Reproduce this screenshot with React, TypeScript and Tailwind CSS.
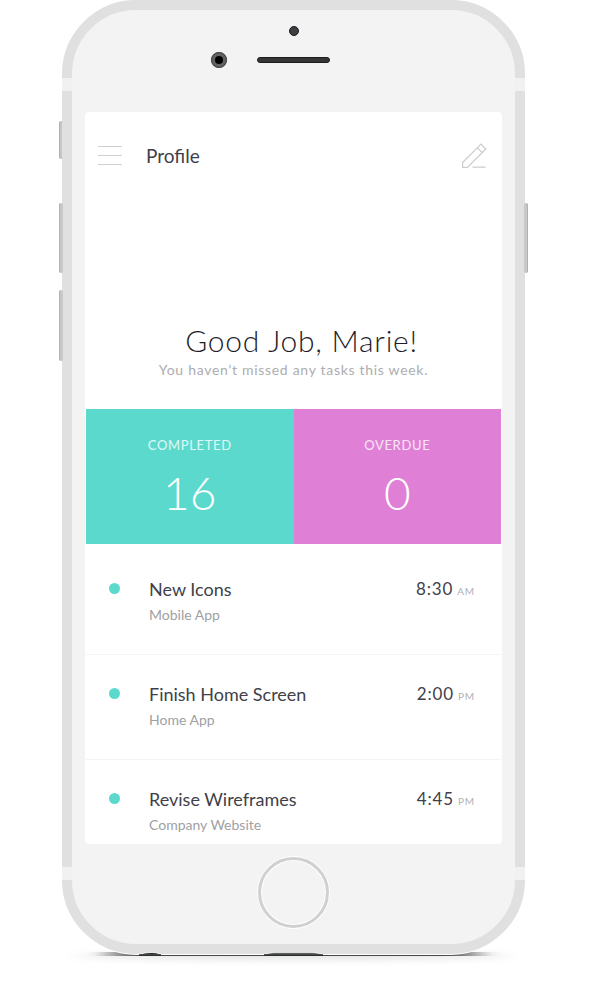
type Task = {
  title: string;
  project: string;
  time: string;
  period: string;
};

const tasks: Task[] = [
  { title: "New Icons", project: "Mobile App", time: "8:30", period: "AM" },
  { title: "Finish Home Screen", project: "Home App", time: "2:00", period: "PM" },
  { title: "Revise Wireframes", project: "Company Website", time: "4:45", period: "PM" },
];

function PencilIcon() {
  return (
    <svg width="25" height="26" viewBox="0 0 25 26" fill="none" stroke="#cbcbd0" strokeWidth="1.2" aria-hidden="true">
      <path d="M0.6 24.4V19.6L19 1.2L23.8 6L5.4 24.4H0.6Z" />
      <path d="M15.4 4.8L20.2 9.6" />
      <path d="M10.5 24.2H23.5" />
    </svg>
  );
}

function MenuIcon() {
  return (
    <svg width="24" height="20" viewBox="0 0 24 20" fill="none" stroke="#cfcfcf" strokeWidth="1" aria-hidden="true">
      <path d="M0 0.5H24M0 9.5H24M0 18.5H24" />
    </svg>
  );
}

function GroundShadow() {
  return (
    <svg
      className="absolute -bottom-6 -left-4 -z-10 h-10 w-[calc(100%+32px)]"
      viewBox="0 0 495 40"
      preserveAspectRatio="none"
      aria-hidden="true"
    >
      <defs>
        <linearGradient id="edge" x1="0" x2="1">
          <stop offset="0" stopColor="#444" stopOpacity="0" />
          <stop offset="0.12" stopColor="#444" />
          <stop offset="0.88" stopColor="#444" />
          <stop offset="1" stopColor="#444" stopOpacity="0" />
        </linearGradient>
        <filter id="soft" x="-10%" y="-100%" width="120%" height="300%">
          <feGaussianBlur stdDeviation="4 0.6" />
        </filter>
        <filter id="wide" x="-10%" y="-100%" width="120%" height="300%">
          <feGaussianBlur stdDeviation="12 3" />
        </filter>
      </defs>
      <ellipse cx="247" cy="18" rx="215" ry="4" fill="#bbb" opacity="0.4" filter="url(#wide)" />
      <rect x="47" y="14" width="401" height="4" fill="url(#edge)" filter="url(#soft)" />
    </svg>
  );
}

function BottomEdge() {
  return (
    <svg
      className="absolute -bottom-1 left-0 h-2 w-full"
      viewBox="0 0 463 8"
      preserveAspectRatio="none"
      fill="#2b2e2e"
      stroke="#fff"
      strokeWidth="0.8"
      aria-hidden="true"
    >
      <path d="M77 4.4Q83 2.4 90 2.4Q95 2.4 99 4.4" />
      <path d="M202 4.4Q207 2.8 212 2.8H251Q256 2.8 261 4.4" />
      <path d="M77 4.2H99V6H77ZM202 4.2H261V6H202Z" stroke="none" />
    </svg>
  );
}

function TaskRow({ task }: { task: Task }) {
  return (
    <li className="flex h-[105px] items-start border-b border-[#f4f4f4] pt-[25px] pr-[26px] pl-[23px]">
      <span className="mt-2 size-[11px] shrink-0 rounded-full bg-[#5cd9cd]" />
      <div className="ml-[29px] grow">
        <h3 className="text-lg leading-7 text-[#403f4a]">{task.title}</h3>
        <p className="text-sm leading-6 text-[#a0a0a4]">{task.project}</p>
      </div>
      <p className="flex items-baseline gap-1 text-[17px] leading-7 tracking-wider text-[#403f4a]">
        {task.time}
        <span className="text-[10px] text-[#b0b0b4]">{task.period}</span>
      </p>
    </li>
  );
}

function Screen() {
  return (
    <section className="h-[732px] overflow-hidden rounded bg-white">
      <header className="flex h-[88px] items-center pr-[15px] pl-[13px]">
        <button type="button" aria-label="Menu">
          <MenuIcon />
        </button>
        <h1 className="ml-6 grow text-[19px] text-[#403f4a]">Profile</h1>
        <button type="button" aria-label="Edit profile">
          <PencilIcon />
        </button>
      </header>
      <div className="h-[209px] pt-[120px] text-center">
        <h2 className="pl-4 text-[30px] leading-10 font-light tracking-wide text-[#1f1d2b]">Good Job, Marie!</h2>
        <p className="text-sm leading-5 tracking-wider text-[#adadb0]">You haven’t missed any tasks this week.</p>
      </div>
      <dl className="mx-px grid grid-cols-2 text-center text-white">
        <div className="h-[135px] bg-[#5cd9cd] pt-[26px]">
          <dt className="text-[13px] leading-5 tracking-wider text-white/80">COMPLETED</dt>
          <dd className="mt-3.5 text-[46px] leading-[48px] font-light">16</dd>
        </div>
        <div className="h-[135px] bg-[#df80d6] pt-[26px]">
          <dt className="text-[13px] leading-5 tracking-wider text-white/80">OVERDUE</dt>
          <dd className="mt-3.5 text-[46px] leading-[48px] font-light">0</dd>
        </div>
      </dl>
      <ul className="mx-px pt-1.5">
        {tasks.map((task) => (
          <TaskRow key={task.title} task={task} />
        ))}
      </ul>
    </section>
  );
}

export default function App() {
  return (
    <main className="min-h-screen bg-white pr-[75px] pb-11 pl-[62px] font-['Lato',sans-serif]">
      <div className="relative isolate max-w-[463px]">
        <GroundShadow />
        <span className="absolute top-[121px] -left-[3px] h-[38px] w-[3px] rounded-l-xs border-l border-[#b0b0b0] bg-[#c8c8c8]" />
        <span className="absolute top-[203px] -left-[3px] h-[70px] w-1 rounded-xs border-l border-[#b0b0b0] bg-[#c8c8c8]" />
        <span className="absolute top-[290px] -left-[3px] h-[71px] w-1 rounded-xs border-l border-[#b0b0b0] bg-[#c8c8c8]" />
        <span className="absolute top-[203px] -right-[3px] h-[70px] w-1 rounded-xs border-r border-[#b0b0b0] bg-[#c8c8c8]" />

        <div className="rounded-[74px] border-10 border-[#e0e0e0] bg-[#f3f3f3] px-[13px] shadow-[0_1px_0_#fff]">
          <div className="flex h-[102px] flex-col items-center pt-4">
            <span className="size-[10px] rounded-full border border-[#1c1c1e] bg-[#3d3e41]" />
            <div className="mt-4 grid w-full grid-cols-[1fr_auto_1fr] items-center gap-[30px]">
              <span className="size-4 justify-self-end rounded-full border-4 border-[#626262] bg-black outline-1 -outline-offset-1 outline-[#444]" />
              <span className="h-1.5 w-[73px] rounded-full border border-[#1d1d1d] bg-[#353535]" />
            </div>
          </div>
          <Screen />
          <div className="flex h-[100px] justify-center pt-3">
            <button
              type="button"
              aria-label="Home"
              className="size-[73px] rounded-full border border-white bg-white p-0"
            >
              <span className="block size-full rounded-full border-3 border-[#cfd0d0] bg-[#f3f3f3] shadow-[inset_0_0_0_1px_#fff]" />
            </button>
          </div>
        </div>
        <BottomEdge />

        <span className="absolute top-[78px] left-0 h-[13px] w-2.5 bg-[#f1f1f1]" />
        <span className="absolute top-[78px] right-0 h-[13px] w-2.5 bg-[#f1f1f1]" />
        <span className="absolute bottom-[74px] left-0 h-[13px] w-2.5 bg-[#f1f1f1]" />
        <span className="absolute right-0 bottom-[74px] h-[13px] w-2.5 bg-[#f1f1f1]" />
      </div>
    </main>
  );
}
